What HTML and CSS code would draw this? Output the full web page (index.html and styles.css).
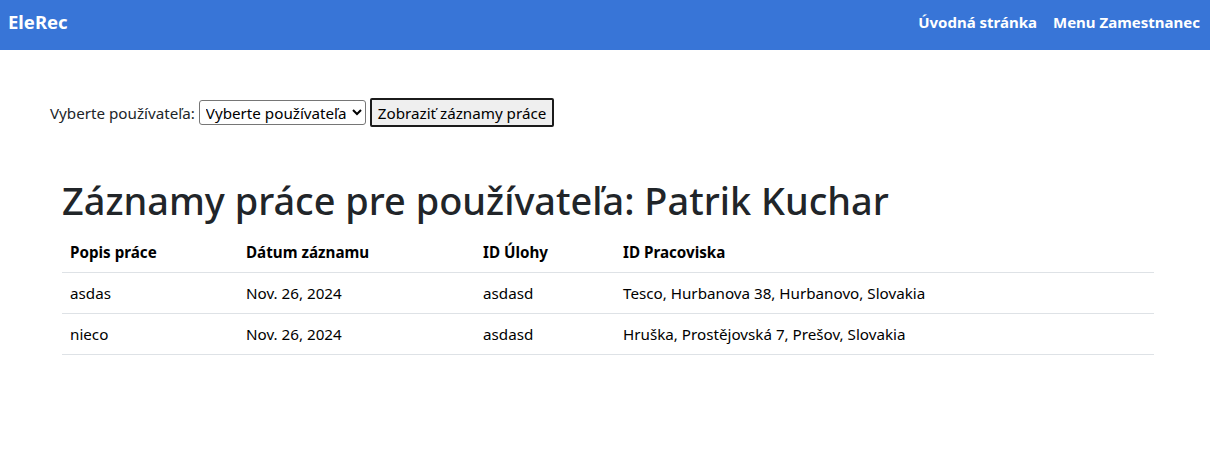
FILE: index.html
```html
<!DOCTYPE html>
<html lang="sk">
<head>
<meta charset="utf-8">
<title>EleRec</title>
<link rel="stylesheet" href="styles.css">
</head>
<body>
<nav class="navbar">
  <a class="brand" href="#">EleRec</a>
  <div class="nav-links">
    <a href="#">Úvodná stránka</a>
    <a href="#">Menu Zamestnanec</a>
  </div>
</nav>
<main class="page">
  <form class="filter">
    <label for="user">Vyberte používateľa:</label>
    <select id="user" class="select">
      <option>Vyberte používateľa</option>
    </select>
    <button type="button" class="btn">Zobraziť záznamy práce</button>
  </form>
  <section class="records">
    <h1 class="title">Záznamy práce pre používateľa: Patrik Kuchar</h1>
    <table class="table">
      <thead>
        <tr><th class="c1">Popis práce</th><th class="c2">Dátum záznamu</th><th class="c3">ID Úlohy</th><th>ID Pracoviska</th></tr>
      </thead>
      <tbody>
        <tr><td>asdas</td><td>Nov. 26, 2024</td><td>asdasd</td><td>Tesco, Hurbanova 38, Hurbanovo, Slovakia</td></tr>
        <tr><td>nieco</td><td>Nov. 26, 2024</td><td>asdasd</td><td>Hruška, Prostějovská 7, Prešov, Slovakia</td></tr>
      </tbody>
    </table>
  </section>
</main>
</body>
</html>
```
FILE: styles.css
```css
* { box-sizing: border-box; }
body {
  margin: 0;
  font-family: "Noto Sans", "Open Sans", sans-serif;
  font-size: 15.2px;
  line-height: 24px;
  color: #212529;
  background: #fff;
}
.navbar {
  height: 50px;
  background: #3875d7;
  display: flex;
  align-items: center;
  justify-content: space-between;
  padding: 0 10px 6px 8px;
}
.navbar a {
  color: #fff;
  text-decoration: none;
  font-weight: 700;
}
.brand { font-size: 18.5px; }
.nav-links { display: flex; gap: 16px; font-size: 15px; }
.page { padding: 48px 56px 0 50px; }
.filter {
  display: flex;
  align-items: center;
  gap: 4px;
  color: #212529;
}
.select {
  font: inherit;
  height: 25px;
  padding: 0 2px;
  border: 1px solid #767676;
  border-radius: 3px;
  background: #fff;
  color: #000;
}
.btn {
  font: inherit;
  height: 29px;
  padding: 0 6px;
  border: 2px solid #1b1b1b;
  border-radius: 2px;
  background: #efefef;
  color: #000;
}
.records { padding: 49px 0 0 12px; }
.title {
  margin: 0 0 8px;
  font-size: 37.9px;
  font-weight: 500;
  line-height: 48px;
}
.table {
  width: 1092px;
  border-collapse: collapse;
  color: #000;
}
.table th, .table td {
  text-align: left;
  padding: 8px;
  border-bottom: 1px solid #dee2e6;
}
.table th { font-weight: 700; }
.c1 { width: 176px; }
.c2 { width: 237px; }
.c3 { width: 140px; }
```
